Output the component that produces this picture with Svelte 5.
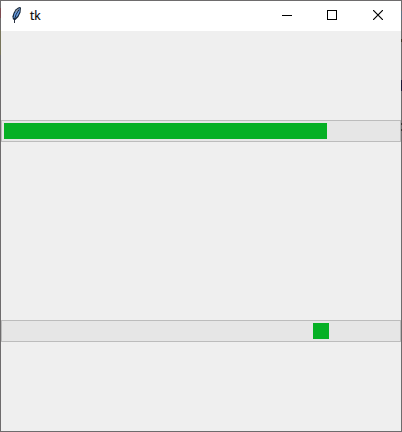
<script>
  const bars = [
    { name: 'determinate', start: 0, size: 323 },
    { name: 'indeterminate', start: 309, size: 16 }
  ];
</script>

<div class="window">
  <header>
    <svg class="feather" width="16" height="17" viewBox="0 0 16 17" aria-hidden="true">
      <path d="M11 0 9.2 .4 6.5 2.6 4.5 6 3.4 9.5 4 12.6 6.4 13 9.4 9.9 11.5 5.4 12 .8Z" fill="#17283c" />
      <path d="M10.8 1 7.6 3.2 5.4 6.8 4.6 10.4 5.4 12 8.6 8.8 10.6 4.8Z" fill="#6ba3ea" />
      <path d="M10.6 .9 7.4 3 5.8 5.8 8.8 3.8Z" fill="#8f9398" />
      <path d="M10 2.6 7.2 7.3 5.5 12.1 5.5 16" fill="none" stroke="#10182a" stroke-width=".9" />
    </svg>
    <span class="title">tk</span>
    <div class="controls">
      <button aria-label="Minimize">
        <svg width="10" height="10" shape-rendering="crispEdges"><path d="M0 5.5H10" /></svg>
      </button>
      <button aria-label="Maximize">
        <svg width="10" height="10" shape-rendering="crispEdges"><path d="M.5 .5H9.5V9.5H.5Z" /></svg>
      </button>
      <button aria-label="Close">
        <svg width="10" height="10"><path d="M0 0 10 10M10 0 0 10" stroke-width="1.2" /></svg>
      </button>
    </div>
  </header>
  <main>
    {#each bars as bar (bar.name)}
      <div class="trough" role="progressbar" aria-label={bar.name}>
        <div class="fill" style="margin-left: {bar.start}px; width: {bar.size}px"></div>
      </div>
    {/each}
  </main>
</div>

<style>
  .window {
    position: relative;
    box-sizing: border-box;
    width: 402px;
    height: 432px;
    display: flex;
    flex-direction: column;
    border: 1px solid #6e6c6d;
    background: #efefef;
  }
  /* desktop content showing through the translucent window edge */
  .window::before,
  .window::after {
    content: "";
    position: absolute;
    top: 0;
    width: 1px;
    height: 140px;
  }
  .window::before {
    left: -1px;
    background: linear-gradient(#6e6c6d 7px, #7d4a50 7px 17px, #6e6c6d 17px 29px, #77745a 29px 54px, #6e6c6d 54px);
  }
  .window::after {
    right: -1px;
    background: linear-gradient(#6e6c6d 10px, #5d7384 10px 19px, #6e6c6d 19px 38px, #3a3020 38px 41px, #6e6c6d 41px 79px, #1c1836 79px 90px, #6e6c6d 90px 122px, #33302f 122px 124px, #6e6c6d 124px 128px, #33302f 128px 130px, #6e6c6d 130px);
  }
  header {
    flex: none;
    height: 30px;
    display: flex;
    background: #fff;
  }
  .feather {
    flex: none;
    margin: 6px 0 0 8px;
  }
  .title {
    margin-left: 5px;
    font: 12px/29px "Open Sans", "Noto Sans", sans-serif;
    color: #000;
    -webkit-text-stroke: .2px #000;
  }
  .controls {
    margin-left: auto;
    display: flex;
  }
  button {
    width: 45px;
    height: 30px;
    padding: 9px 0 0 17px;
    border: 0;
    background: none;
    display: flex;
    align-items: flex-start;
  }
  button:last-child {
    width: 46px;
    padding-left: 18px;
  }
  button svg {
    flex: none;
    fill: none;
    stroke: #000;
  }
  main {
    flex: 1;
    display: flex;
    flex-direction: column;
    gap: 178px;
    padding-top: 89px;
  }
  .trough {
    box-sizing: border-box;
    flex: none;
    height: 22px;
    padding: 2px;
    border: 1px solid #bcbcbc;
    background: #e6e6e6;
  }
  .fill {
    height: 16px;
    background: #06b025;
  }
</style>
